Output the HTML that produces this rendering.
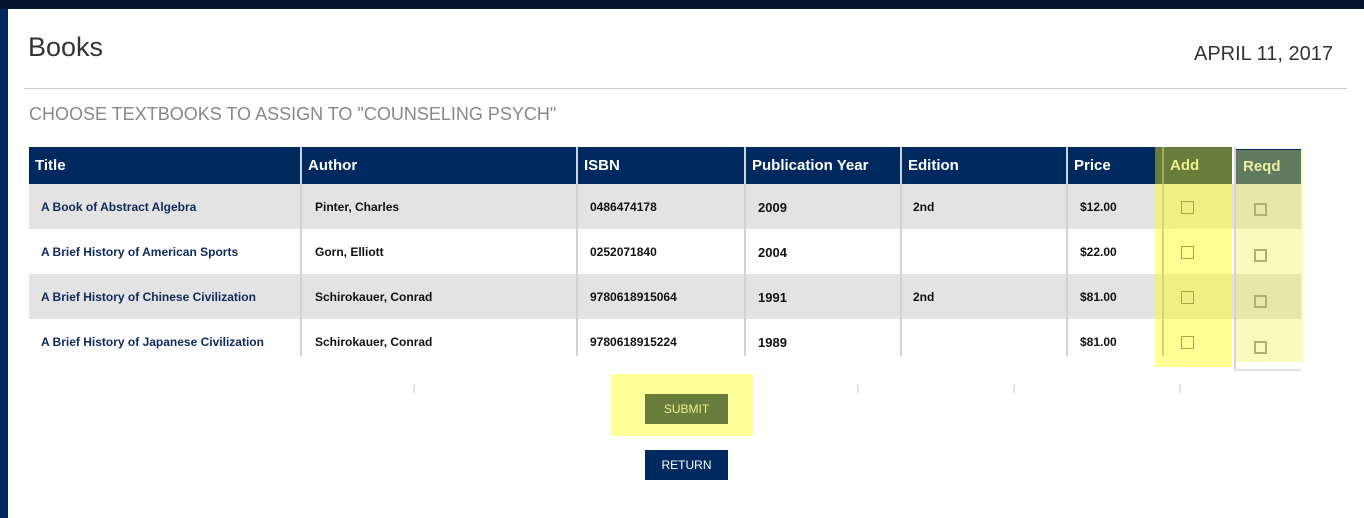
<!DOCTYPE html>
<html><head><meta charset="utf-8"><style>
*{margin:0;padding:0;box-sizing:border-box}
body{width:1364px;height:518px;position:relative;background:#fff;font-family:"Liberation Sans",Arial,sans-serif;overflow:hidden}
.a{position:absolute}
.h{position:absolute;top:147px;height:37px;background:#002a5f;color:#fff;font-weight:bold;font-size:15px;line-height:37px;padding-left:6px}
.t{position:absolute;font-size:12px;font-weight:bold;color:#111}
.ti{color:#0d2a5c}
.sep{position:absolute;width:2px;background:#d0d4da}
.cb{position:absolute;width:13px;height:13px;border:1px solid #aaa648}
.cr{position:absolute;width:13px;height:13px;border:2px solid #b3ad78}
.tk{position:absolute;top:385px;width:2px;height:8px;background:#e2e2e2}
</style></head><body>
<div class="a" style="left:0;top:0;width:1364px;height:9px;background:#03142e"></div>
<div class="a" style="left:0;top:9px;width:8px;height:509px;background:#002a5f"></div>
<div class="a" style="left:28px;top:32px;font-size:27px;color:#333">Books</div>
<div class="a" style="left:1194px;top:43px;font-size:20px;color:#333">APRIL 11, 2017</div>
<div class="a" style="left:24px;top:88px;width:1323px;height:1px;background:#ccc"></div>
<div class="a" style="left:29px;top:104px;font-size:18px;color:#888">CHOOSE TEXTBOOKS TO ASSIGN TO "COUNSELING PSYCH"</div>

<div class="a" style="left:29px;top:184px;width:1272px;height:45px;background:#e3e3e3"></div>
<div class="a" style="left:29px;top:274px;width:1272px;height:45px;background:#e3e3e3"></div>

<div class="h" style="left:29px;width:272px">Title</div>
<div class="h" style="left:302px;width:275px">Author</div>
<div class="h" style="left:578px;width:167px">ISBN</div>
<div class="h" style="left:746px;width:155px">Publication Year</div>
<div class="h" style="left:902px;width:165px">Edition</div>
<div class="h" style="left:1068px;width:88px">Price</div>
<div class="h" style="left:1235px;width:66px;top:149px;height:35px">Reqd</div>

<div class="sep" style="left:300px;top:147px;height:209px"></div>
<div class="sep" style="left:576px;top:147px;height:209px"></div>
<div class="sep" style="left:744px;top:147px;height:209px"></div>
<div class="sep" style="left:900px;top:147px;height:209px"></div>
<div class="sep" style="left:1066px;top:147px;height:209px"></div>
<div class="sep" style="left:1162px;top:147px;height:209px"></div>
<div class="sep" style="left:1234px;top:147px;height:224px"></div>
<div class="a" style="left:1234px;top:369px;width:67px;height:2px;background:#e2e2e2"></div>

<div class="a" style="left:1155px;top:147px;width:77px;height:220px;background:rgba(255,255,0,.42)"></div>
<div class="a" style="left:1236px;top:150px;width:67px;height:212px;background:rgba(240,240,40,.32)"></div>
<div class="a" style="left:1155px;top:147px;width:77px;height:37px;background:#687c3b;color:#f0f08a;font-weight:bold;font-size:15px;line-height:37px;padding-left:15px">Add</div>
<div class="a" style="left:1236px;top:150px;width:65px;height:34px;background:#5f7a5d;color:#eeeea0;font-weight:bold;font-size:15px;line-height:33px;padding-left:7px">Reqd</div>
<div class="a" style="left:1162px;top:147px;width:2px;height:209px;background:rgba(200,200,120,.6)"></div>

<div class="t ti" style="left:41px;top:200px">A Book of Abstract Algebra</div>
<div class="t" style="left:315px;top:200px">Pinter, Charles</div>
<div class="t" style="left:590px;top:200px">0486474178</div>
<div class="t" style="left:758px;top:200px;font-size:13px">2009</div>
<div class="t" style="left:913px;top:200px">2nd</div>
<div class="t" style="left:1080px;top:200px">$12.00</div>

<div class="t ti" style="left:41px;top:245px">A Brief History of American Sports</div>
<div class="t" style="left:315px;top:245px">Gorn, Elliott</div>
<div class="t" style="left:590px;top:245px">0252071840</div>
<div class="t" style="left:758px;top:245px;font-size:13px">2004</div>
<div class="t" style="left:1080px;top:245px">$22.00</div>

<div class="t ti" style="left:41px;top:290px">A Brief History of Chinese Civilization</div>
<div class="t" style="left:315px;top:290px">Schirokauer, Conrad</div>
<div class="t" style="left:590px;top:290px">9780618915064</div>
<div class="t" style="left:758px;top:290px;font-size:13px">1991</div>
<div class="t" style="left:913px;top:290px">2nd</div>
<div class="t" style="left:1080px;top:290px">$81.00</div>

<div class="t ti" style="left:41px;top:335px">A Brief History of Japanese Civilization</div>
<div class="t" style="left:315px;top:335px">Schirokauer, Conrad</div>
<div class="t" style="left:590px;top:335px">9780618915224</div>
<div class="t" style="left:758px;top:335px;font-size:13px">1989</div>
<div class="t" style="left:1080px;top:335px">$81.00</div>

<div class="cb" style="left:1181px;top:201px"></div>
<div class="cb" style="left:1181px;top:246px"></div>
<div class="cb" style="left:1181px;top:291px"></div>
<div class="cb" style="left:1181px;top:336px"></div>
<div class="cr" style="left:1254px;top:203px"></div>
<div class="cr" style="left:1254px;top:249px"></div>
<div class="cr" style="left:1254px;top:295px"></div>
<div class="cr" style="left:1254px;top:341px"></div>

<div class="tk" style="left:413px"></div>
<div class="tk" style="left:689px"></div>
<div class="tk" style="left:857px"></div>
<div class="tk" style="left:1013px"></div>
<div class="tk" style="left:1179px"></div>

<div class="a" style="left:611px;top:374px;width:142px;height:62px;background:#ffff99"></div>
<div class="a" style="left:645px;top:394px;width:83px;height:30px;background:#687c3b;color:#f0f08a;font-size:12px;text-align:center;line-height:30px">SUBMIT</div>
<div class="a" style="left:645px;top:450px;width:83px;height:30px;background:#002a5f;color:#fff;font-size:12px;text-align:center;line-height:30px">RETURN</div>
</body></html>
